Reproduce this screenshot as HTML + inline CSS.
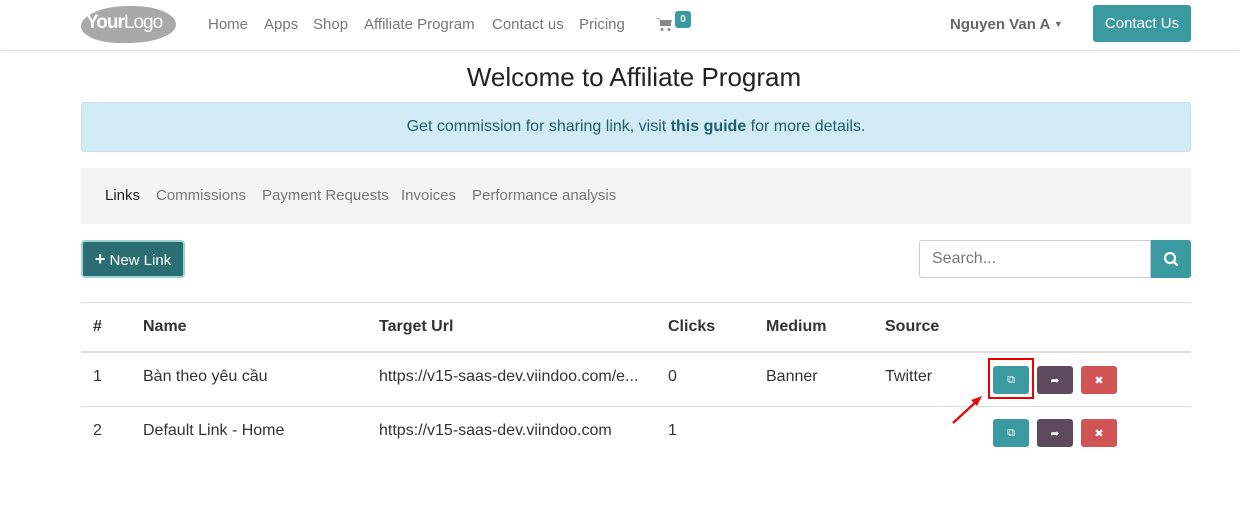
<!DOCTYPE html>
<html><head><meta charset="utf-8"><style>
body{margin:0;width:1240px;height:511px;background:#fff;font-family:"Liberation Sans",sans-serif;color:#212529;position:relative;overflow:hidden}
.a{position:absolute}
.nav{top:0;left:0;width:1240px;height:50px;border-bottom:1px solid #e6e6e6;box-shadow:0 1px 3px rgba(0,0,0,.06)}
.nl{top:16px;font-size:15px;color:#777}
.tb{top:187px;font-size:15px;color:#777}
.btn{border-radius:3px}
.row{font-size:16px;color:#333}
.ab{width:36px;height:28px;border-radius:3px;color:#fff;font-size:11px;display:flex;align-items:center;justify-content:center}
</style></head><body>
<div class="a nav"></div>
<div class="a" style="left:81px;top:6px;width:95px;height:37px;background:#a9a9a9;border-radius:50% 45% 50% 40%/55% 50% 50% 45%"></div>
<div class="a" style="left:86px;top:12px;font-size:19px;color:#fff;letter-spacing:-1px"><b>Your</b>Logo</div>
<div class="a nl" style="left:208px">Home</div>
<div class="a nl" style="left:264px">Apps</div>
<div class="a nl" style="left:313px">Shop</div>
<div class="a nl" style="left:364px">Affiliate Program</div>
<div class="a nl" style="left:492px">Contact us</div>
<div class="a nl" style="left:579px">Pricing</div>
<svg class="a" style="left:656px;top:17px" width="16" height="15" viewBox="0 0 16 15"><path d="M0 1h3l2 8h9l2-6H4" fill="#888"/><rect x="4" y="3" width="11" height="6" fill="#888"/><circle cx="6" cy="12.5" r="1.5" fill="#888"/><circle cx="13" cy="12.5" r="1.5" fill="#888"/></svg>
<div class="a" style="left:675px;top:11px;width:16px;height:17px;background:#3a9aa0;border-radius:3px;color:#fff;font-size:10px;font-weight:bold;text-align:center;line-height:17px">0</div>
<div class="a" style="left:950px;top:16px;font-size:15px;color:#666;font-weight:bold">Nguyen Van A <span style="font-size:9px;vertical-align:2px">▼</span></div>
<div class="a btn" style="left:1093px;top:5px;width:98px;height:37px;background:#3a9aa0;color:#fff;font-size:15px;text-align:center;line-height:37px">Contact Us</div>
<div class="a" style="left:14px;width:1240px;top:62px;text-align:center;font-size:26px;color:#222">Welcome to Affiliate Program</div>
<div class="a" style="left:81px;top:102px;width:1108px;height:48px;background:#d1ecf5;border:1px solid #bfe3f0;border-radius:3px;text-align:center;line-height:48px;font-size:16px;color:#1f5f6e">Get commission for sharing link, visit <b>this guide</b> for more details.</div>
<div class="a" style="left:81px;top:168px;width:1110px;height:56px;background:#f4f4f4"></div>
<div class="a" style="left:105px;top:187px;font-size:15px;color:#222">Links</div>
<div class="a tb" style="left:156px">Commissions</div>
<div class="a tb" style="left:262px">Payment Requests</div>
<div class="a tb" style="left:401px">Invoices</div>
<div class="a tb" style="left:472px">Performance analysis</div>
<div class="a" style="left:81px;top:240px;width:104px;height:38px;background:#2a6e73;border:2px solid #9fd0d3;box-sizing:border-box;border-radius:4px;color:#fff;font-size:15px;line-height:34px;text-align:center"><b style="font-size:18px">+</b> New Link</div>
<div class="a" style="left:919px;top:240px;width:232px;height:38px;border:1px solid #ccc;box-sizing:border-box;border-radius:3px 0 0 3px;font-size:16px;color:#777;line-height:36px;padding-left:12px">Search...</div>
<div class="a" style="left:1151px;top:240px;width:40px;height:38px;background:#3a9aa0;border-radius:0 3px 3px 0"><svg width="40" height="38"><circle cx="19" cy="18" r="5" stroke="#fff" stroke-width="2.2" fill="none"/><path d="M22.5 21.5l4 4" stroke="#fff" stroke-width="2.5"/></svg></div>
<div class="a" style="left:81px;top:302px;width:1110px;border-top:1px solid #ddd"></div>
<div class="a" style="left:81px;top:351px;width:1110px;border-top:2px solid #ddd"></div>
<div class="a" style="left:81px;top:406px;width:1110px;border-top:1px solid #ddd"></div>
<div class="a row" style="top:318px;left:93px;font-weight:bold">#</div>
<div class="a row" style="top:318px;left:143px;font-weight:bold">Name</div>
<div class="a row" style="top:318px;left:379px;font-weight:bold">Target Url</div>
<div class="a row" style="top:318px;left:668px;font-weight:bold">Clicks</div>
<div class="a row" style="top:318px;left:766px;font-weight:bold">Medium</div>
<div class="a row" style="top:318px;left:885px;font-weight:bold">Source</div>
<div class="a row" style="top:368px;left:93px">1</div>
<div class="a row" style="top:368px;left:143px">Bàn theo yêu cầu</div>
<div class="a row" style="top:368px;left:379px">https://v15-saas-dev.viindoo.com/e...</div>
<div class="a row" style="top:368px;left:668px">0</div>
<div class="a row" style="top:368px;left:766px">Banner</div>
<div class="a row" style="top:368px;left:885px">Twitter</div>
<div class="a row" style="top:422px;left:93px">2</div>
<div class="a row" style="top:422px;left:143px">Default Link - Home</div>
<div class="a row" style="top:422px;left:379px">https://v15-saas-dev.viindoo.com</div>
<div class="a row" style="top:422px;left:668px">1</div>
<div class="a ab" style="left:993px;top:366px;background:#3a9aa0">⧉</div>
<div class="a ab" style="left:1037px;top:366px;background:#5e4a5e">➦</div>
<div class="a ab" style="left:1081px;top:366px;background:#d05454">✖</div>
<div class="a" style="left:988px;top:358px;width:42px;height:37px;border:2px solid #e00"></div>
<div class="a ab" style="left:993px;top:419px;background:#3a9aa0">⧉</div>
<div class="a ab" style="left:1037px;top:419px;background:#5e4a5e">➦</div>
<div class="a ab" style="left:1081px;top:419px;background:#d05454">✖</div>
<svg class="a" style="left:950px;top:394px" width="36" height="32"><path d="M3 29L28 6" stroke="#e01010" stroke-width="2.5"/><path d="M32 2l-11 4 6 6z" fill="#e01010"/></svg>
</body></html>
